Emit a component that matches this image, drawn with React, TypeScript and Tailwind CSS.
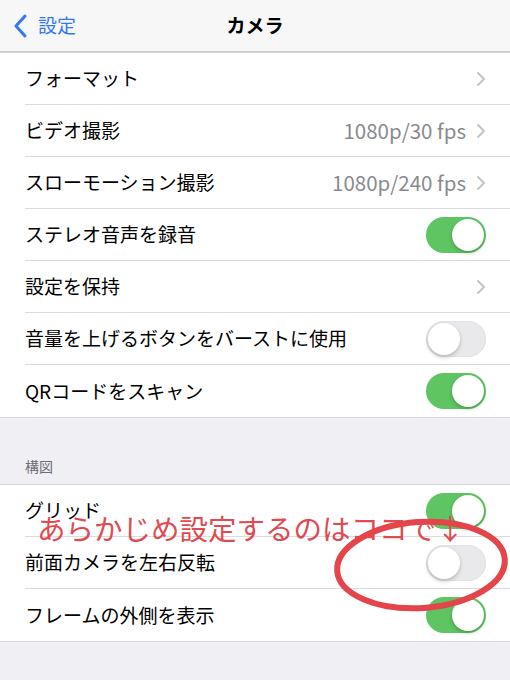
import React from 'react';

const font = { fontFamily: '"Noto Sans CJK JP", "Noto Sans", sans-serif' };

function Toggle({ on }: { on: boolean }) {
  return (
    <div
      className={
        'relative h-[36px] w-[60px] rounded-full ' +
        (on ? 'bg-[#5fc562]' : 'bg-[#e9e9eb] shadow-[inset_0_0_0_1px_#e2e2e4]')
      }
    >
      <div
        className={
          'absolute top-[2px] h-[32px] w-[32px] rounded-full bg-white shadow-[0_2px_4px_rgba(0,0,0,0.22)] ' +
          (on ? 'left-[26px]' : 'left-[2px]')
        }
      />
    </div>
  );
}

function Chevron() {
  return (
    <svg width="10" height="16" viewBox="0 0 10 16" className="ml-[10px]">
      <path d="M2 2 L8 8 L2 14" fill="none" stroke="#c4c4c7" strokeWidth="2" strokeLinecap="round" strokeLinejoin="round" />
    </svg>
  );
}

type Row = { label: string; value?: string; chevron?: boolean; toggle?: boolean };

function Group({ rows }: { rows: Row[] }) {
  return (
    <div className="border-y border-[#d8d8dc] bg-white">
      {rows.map((r, i) => (
        <div key={r.label} className="pl-[25px]">
          <div
            className={
              'flex h-[52px] items-center pr-[24px] ' +
              (i < rows.length - 1 ? 'border-b border-[#dcdcdf]' : '')
            }
          >
            <span className="flex-1 text-[19px] text-black">{r.label}</span>
            {r.value && <span className="text-[20.5px] text-[#8a8a8e]">{r.value}</span>}
            {r.chevron && <Chevron />}
            {r.toggle !== undefined && <Toggle on={r.toggle} />}
          </div>
        </div>
      ))}
    </div>
  );
}

export default function App() {
  const first: Row[] = [
    { label: 'フォーマット', chevron: true },
    { label: 'ビデオ撮影', value: '1080p/30 fps', chevron: true },
    { label: 'スローモーション撮影', value: '1080p/240 fps', chevron: true },
    { label: 'ステレオ音声を録音', toggle: true },
    { label: '設定を保持', chevron: true },
    { label: '音量を上げるボタンをバーストに使用', toggle: false },
    { label: 'QRコードをスキャン', toggle: true },
  ];
  const second: Row[] = [
    { label: 'グリッド', toggle: true },
    { label: '前面カメラを左右反転', toggle: false },
    { label: 'フレームの外側を表示', toggle: true },
  ];

  return (
    <div className="relative h-[680px] w-[510px] overflow-hidden bg-[#efeff4]" style={font}>
      <div className="relative flex h-[52px] items-center border-b border-[#c9c9cc] bg-[#f7f7f8]">
        <div className="flex items-center pl-[14px] text-[#3478f6]">
          <svg width="14" height="24" viewBox="0 0 14 24">
            <path d="M11 2 L2 12 L11 22" fill="none" stroke="#3478f6" strokeWidth="3" strokeLinecap="round" strokeLinejoin="round" />
          </svg>
          <span className="ml-[10px] text-[19px]">設定</span>
        </div>
        <span className="absolute left-1/2 -translate-x-1/2 text-[19px] font-bold text-black">カメラ</span>
      </div>

      <Group rows={first} />

      <div className="h-[66px] pl-[25px] pt-[38px] text-[14px] text-[#6d6d72]">構図</div>

      <Group rows={second} />

      {/* annotation overlay */}
      <div className="absolute left-[37px] top-[509px] text-[28.5px] leading-[38px] text-[#e04a50]">
        あらかじめ設定するのはココで↓
      </div>
      <svg className="absolute left-0 top-0" width="510" height="680" viewBox="0 0 510 680">
        <ellipse cx="421" cy="565" rx="84" ry="43" fill="none" stroke="#e3454b" strokeWidth="6" transform="rotate(-4 421 565)" />
      </svg>
    </div>
  );
}
